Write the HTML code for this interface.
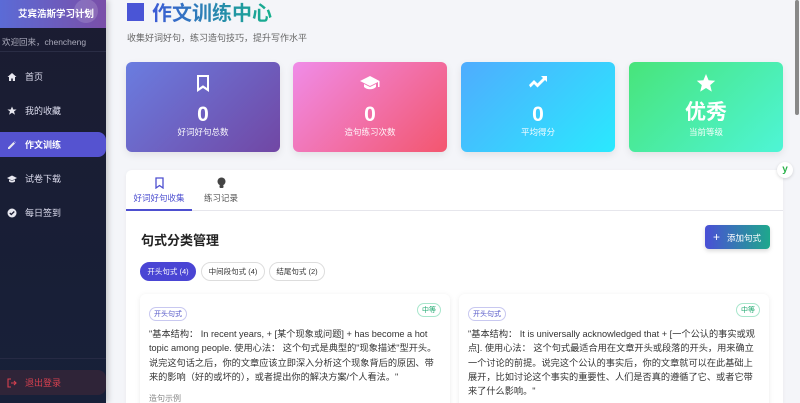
<!DOCTYPE html>
<html><head><meta charset="utf-8"><style>
*{box-sizing:border-box;margin:0;padding:0}
html,body{width:800px;height:403px;overflow:hidden}
body{background:#f4f5f9;font-family:"Liberation Sans","Noto Sans CJK SC",sans-serif;position:relative}
.sb{position:absolute;left:0;top:0;width:106px;height:403px;background:linear-gradient(180deg,#1b1c31,#172039);box-shadow:2px 0 6px rgba(0,0,0,.2)}
.sbh{height:28px;background:linear-gradient(90deg,#5b6bd6,#7a4fa8);color:#fff;font-size:9.5px;font-weight:bold;padding:6px 0 0 18px;position:relative}
.tog{position:absolute;left:74px;top:-1px;width:24px;height:24px;border-radius:50%;background:rgba(255,255,255,.15);color:#fff;text-align:center;line-height:24px;font-size:12px}
.wel{height:24px;color:#aab;font-size:8.5px;padding:8px 0 0 2px;border-bottom:1px solid #2a2d45}
.nav{position:absolute;left:0;width:106px;height:25px;color:#dde;font-size:9px;display:flex;align-items:center;padding-left:7px}
.nav svg{width:10px;height:10px;margin-right:8px;fill:#e8e8f0}
.nav.act{background:#5553d0;border-radius:0 8px 8px 0;color:#fff;font-weight:bold}
.out{position:absolute;left:0;top:370px;width:106px;height:25px;background:#2f2438;border-radius:0 8px 8px 0;color:#d6404f;font-size:9px;display:flex;align-items:center;padding-left:7px}
.ttl{position:absolute;left:127px;top:-3px;font-size:20px;font-weight:bold;display:flex;align-items:center;white-space:nowrap}
.ttl i{display:inline-block;width:17px;height:18px;background:#4a55d6;margin-right:8px}
.ttl span{background:linear-gradient(90deg,#3d5bd6,#16b08c);-webkit-background-clip:text;color:transparent}
.sub{position:absolute;left:127px;top:31px;font-size:9px;color:#666;white-space:nowrap}
.st{position:absolute;top:62px;width:154px;height:90px;border-radius:6px;color:#fff;text-align:center;box-shadow:0 3px 8px rgba(0,0,0,.08)}
.st svg{position:absolute;left:67px;top:11px;width:20px;height:20px;fill:#fff}
.st b{position:absolute;left:0;right:0;top:42px;font-size:21px;line-height:21px}
.st .l{position:absolute;left:0;right:0;top:64px;font-size:8.5px;opacity:.95}
.main{position:absolute;left:126px;top:170px;width:657px;height:233px;overflow:hidden;background:#fff;border-radius:6px 6px 0 0;box-shadow:0 1px 4px rgba(0,0,0,.05)}
.tabs{height:41px;border-bottom:1px solid #e6e6ec;position:relative}
.tab{position:absolute;top:0;height:41px;font-size:8.5px;text-align:center;white-space:nowrap}
.tab svg{display:block;margin:7px auto 3px;width:11px;height:12px}
.h{position:absolute;left:15px;top:60px;font-size:13px;font-weight:bold;color:#222}
.btn{position:absolute;left:579px;top:55px;width:65px;height:24px;border-radius:4px;background:linear-gradient(90deg,#4a4fd6,#1ea88c);color:#fff;font-size:8.5px;line-height:24px;padding-left:8px;box-shadow:0 2px 4px rgba(0,0,0,.15);white-space:nowrap}
.pill{position:absolute;top:92px;height:19px;border-radius:10px;border:1px solid #ddd;font-size:7.5px;line-height:17px;color:#333;white-space:nowrap;text-align:center}
.card{position:absolute;top:124px;width:310px;height:130px;background:#fff;border-radius:6px;box-shadow:0 1px 6px rgba(0,0,0,.08);padding:9px 9px}
.tag{display:inline-block;border:1px solid #c8c8f0;color:#5558c8;border-radius:8px;font-size:7px;padding:1px 4px}
.lv{position:absolute;right:9px;top:9px;border:1px solid #a8e6cc;color:#20a870;border-radius:8px;font-size:7px;padding:1px 4px}
.txt{font-size:9.2px;line-height:14.3px;color:#333;margin-top:6px}
</style></head><body>
<div class="sb">
<div class="sbh">艾宾浩斯学习计划<div class="tog">‹</div></div>
<div class="wel">欢迎回来，chencheng</div>
<div class="nav" style="top:64px"><svg viewBox="0 0 10 10"><path d="M5 1L0.5 5H2v4h2.2V6.5h1.6V9H8V5h1.5z"/></svg>首页</div>
<div class="nav" style="top:98px"><svg viewBox="0 0 10 10"><path d="M5 .5l1.3 3H9.6L7 5.5l1 3.3L5 6.8 2 8.8l1-3.3L.4 3.5h3.3z"/></svg>我的收藏</div>
<div class="nav act" style="top:132px"><svg viewBox="0 0 10 10"><path d="M1 7.5V9h1.5L8 3.5 6.5 2zM8.6 2.9a.5.5 0 000-.7l-.8-.8a.5.5 0 00-.7 0z"/></svg>作文训练</div>
<div class="nav" style="top:166px"><svg viewBox="0 0 10 10"><path d="M5 1.5L0 4l5 2.5L10 4zM2 5.5v2c1.5 1.3 4.5 1.3 6 0v-2L5 7z"/></svg>试卷下载</div>
<div class="nav" style="top:200px"><svg viewBox="0 0 10 10"><circle cx="5" cy="5" r="4.5"/><path d="M2.8 5l1.5 1.5 3-3" stroke="#1b1d33" stroke-width="1.3" fill="none"/></svg>每日签到</div>
<div style="position:absolute;top:358px;left:0;width:106px;border-top:1px solid #262a44"></div>
<div class="out"><svg viewBox="0 0 10 10" style="width:10px;height:10px;margin-right:8px" fill="none" stroke="#d6404f" stroke-width="1.1"><path d="M4 1H1v8h3M4 5h5M7 3l2 2-2 2"/></svg>退出登录</div>
</div>
<div class="ttl"><i></i><span>作文训练中心</span></div>
<div class="sub">收集好词好句，练习造句技巧，提升写作水平</div>
<div class="st" style="left:126px;background:linear-gradient(135deg,#6a7de0,#7147a4)"><svg viewBox="0 0 20 20"><path d="M4 2h12v17l-6-4-6 4zM6 4v11l4-2.7 4 2.7V4z"/></svg><b>0</b><div class="l">好词好句总数</div></div>
<div class="st" style="left:293px;background:linear-gradient(135deg,#f08ce8,#f3566e)"><svg viewBox="0 0 20 20"><path d="M10 3L0 8l10 5 8-4v5h1.5V8zM4 11v3c3 3 9 3 12 0v-3l-6 3z"/></svg><b>0</b><div class="l">造句练习次数</div></div>
<div class="st" style="left:461px;background:linear-gradient(135deg,#4facfe,#2ae9fe)"><svg viewBox="0 0 20 20"><path d="M1 15l5-5 3.5 3.5L15 8l-2-2h6v6l-2-2-7.5 7.5L6 14l-3.5 3.5z" transform="translate(0,-3)"/></svg><b>0</b><div class="l">平均得分</div></div>
<div class="st" style="left:629px;background:linear-gradient(135deg,#48e47a,#4ef5d6)"><svg viewBox="0 0 20 20"><path d="M10 1l2.6 6.2 6.6.5-5 4.4 1.6 6.5L10 15l-5.8 3.6 1.6-6.5-5-4.4 6.6-.5z"/></svg><b style="top:40px">优秀</b><div class="l">当前等级</div></div>
<div style="position:absolute;left:777px;top:162px;width:16px;height:16px;border-radius:50%;background:#fff;box-shadow:0 1px 3px rgba(0,0,0,.15);color:#2ab24a;font-size:10px;font-weight:bold;text-align:center;line-height:16px;z-index:2">y</div>
<div style="position:absolute;left:795px;top:0;width:4px;height:115px;background:#888;border-radius:2px"></div>
<div class="main">
<div class="tabs">
<div class="tab" style="left:0;width:66px;color:#4d4fd0;border-bottom:2px solid #4d4fd0"><svg viewBox="0 0 11 12" fill="none" stroke="#4d4fd0" stroke-width="1.3"><path d="M2 1h7v10L5.5 8.5 2 11z"/></svg>好词好句收集</div>
<div class="tab" style="left:72px;width:46px;color:#555"><svg viewBox="0 0 11 12" fill="#444"><circle cx="5.5" cy="4.5" r="4"/><rect x="3.5" y="8" width="4" height="3" rx="1"/></svg>练习记录</div>
</div>
<div class="h">句式分类管理</div>
<div class="btn"><span style="font-size:12px;margin-right:7px">+</span>添加句式</div>
<div class="pill" style="left:14px;width:56px;background:#4a45d4;border-color:#4a45d4;color:#fff">开头句式 (4)</div>
<div class="pill" style="left:75px;width:64px">中间段句式 (4)</div>
<div class="pill" style="left:143px;width:56px">结尾句式 (2)</div>
<div class="card" style="left:14px"><span class="tag">开头句式</span><span class="lv">中等</span><div class="txt">"基本结构： In recent years, + [某个现象或问题] + has become a hot topic among people. 使用心法： 这个句式是典型的"现象描述"型开头。说完这句话之后，你的文章应该立即深入分析这个现象背后的原因、带来的影响（好的或坏的），或者提出你的解决方案/个人看法。"</div><div style="font-size:8px;color:#888;margin-top:9px">造句示例</div></div>
<div class="card" style="left:333px;width:310px"><span class="tag">开头句式</span><span class="lv">中等</span><div class="txt">"基本结构： It is universally acknowledged that + [一个公认的事实或观点]. 使用心法： 这个句式最适合用在文章开头或段落的开头，用来确立一个讨论的前提。说完这个公认的事实后，你的文章就可以在此基础上展开，比如讨论这个事实的重要性、人们是否真的遵循了它、或者它带来了什么影响。"</div></div>
</div>
</body></html>
